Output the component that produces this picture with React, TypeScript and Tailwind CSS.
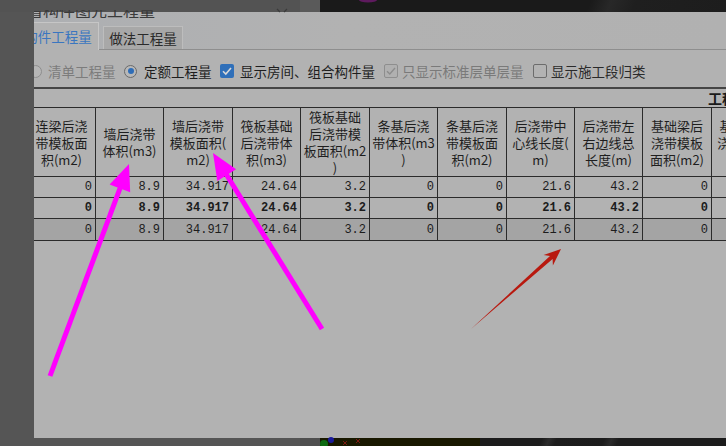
import React from "react";

type Col = { w: number; h: string[]; v: string };

const cols: Col[] = [
  { w: 68, h: ["连梁后浇", "带模板面", "积(m2)"], v: "0" },
  { w: 68, h: ["墙后浇带", "体积(m3)"], v: "8.9" },
  { w: 69, h: ["墙后浇带", "模板面积(", "m2)"], v: "34.917" },
  { w: 68, h: ["筏板基础", "后浇带体", "积(m3)"], v: "24.64" },
  { w: 69, h: ["筏板基础", "后浇带模", "板面积(m2", ")"], v: "3.2" },
  { w: 68, h: ["条基后浇", "带体积(m3", ")"], v: "0" },
  { w: 69, h: ["条基后浇", "带模板面", "积(m2)"], v: "0" },
  { w: 68, h: ["后浇带中", "心线长度(", "m)"], v: "21.6" },
  { w: 68, h: ["后浇带左", "右边线总", "长度(m)"], v: "43.2" },
  { w: 69, h: ["基础梁后", "浇带模板", "面积(m2)"], v: "0" },
  { w: 68, h: ["基础梁后", "浇带体积(", "m3)"], v: "" },
];

function Radio({ checked, dim }: { checked?: boolean; dim?: boolean }) {
  return (
    <span
      className={
        "flex items-center justify-center w-[13px] h-[13px] rounded-full border shrink-0 " +
        (dim ? "border-[#8e8e8e] bg-[#b6b6b6]" : "border-[#6a6a6a] bg-[#b8b8b8]")
      }
    >
      {checked ? <span className="w-[6px] h-[6px] rounded-full bg-[#2f6db7]" /> : null}
    </span>
  );
}

function Check({ kind }: { kind: "on" | "dis" | "off" }) {
  if (kind === "on")
    return (
      <span className="flex items-center justify-center w-[14px] h-[14px] rounded-[2px] bg-[#2f6fb9] shrink-0">
        <svg width="12" height="12" viewBox="0 0 12 12">
          <path d="M2 6.2 L4.8 9 L10 3" fill="none" stroke="#d8d8d8" strokeWidth="1.6" />
        </svg>
      </span>
    );
  if (kind === "dis")
    return (
      <span className="flex items-center justify-center w-[14px] h-[14px] rounded-[2px] border border-[#8e8e8e] bg-[#b0b0b0] shrink-0">
        <svg width="12" height="12" viewBox="0 0 12 12">
          <path d="M2 6.2 L4.8 9 L10 3" fill="none" stroke="#8c8c8c" strokeWidth="1.4" />
        </svg>
      </span>
    );
  return <span className="w-[14px] h-[14px] rounded-[2px] border border-[#6c6c6c] bg-[#b3b3b3] shrink-0" />;
}

export default function App() {
  const rows = [
    { bold: false, bg: "bg-[#b2b2b2]", h: "h-[21px]" },
    { bold: true, bg: "bg-[#b2b2b2]", h: "h-[21px]" },
    { bold: false, bg: "bg-[#a4a4a4]", h: "h-[22px]" },
  ];
  return (
    <div className="relative w-[726px] h-[446px] overflow-hidden bg-[#555555] font-['Noto_Sans_CJK_SC','Noto_Sans',sans-serif]">
      {/* top strip */}
      <div className="flex h-[12px]">
        <div className="w-[300px] bg-[#535353]" />
        <div className="w-[20px] bg-[#5a5a5a]" />
        <div className="flex-1 bg-[linear-gradient(112deg,#1a1a1a_0%,#1a1a1a_66%,#282828_71%,#1f1f1f_77%,#1d1d1d_100%)]" />
      </div>

      {/* middle */}
      <div className="flex h-[426px]">
        <div className="w-[34px] bg-[#555555]" />
        <div className="w-[692px] flex flex-col overflow-hidden bg-[#b2b2b2]">
          {/* tabs */}
          <div className="h-[38px] shrink-0 flex items-end border-b border-[#8e8e8e] bg-[linear-gradient(90deg,#adafb2_0%,#b2b2b2_45%,#b1b1b1_100%)]">
            <div className="-ml-[16px] -mb-px w-[81px] h-[28px] shrink-0 bg-[#b2b2b2] border-t border-r border-[#c6c6c6] flex items-center justify-center text-[13.5px] leading-[16px] text-[#3a76c0] pb-[1px]">
              构件工程量
            </div>
            <div className="ml-[4px] w-[80px] h-[23px] shrink-0 bg-[#a8a8a8] border border-b-0 border-[#bdbdbd] flex items-center justify-center text-[13.5px] leading-[16px] text-[#2a2a2a]">
              做法工程量
            </div>
          </div>

          {/* options */}
          <div className="h-[37px] shrink-0 flex items-center pt-[5px] text-[13.5px] leading-[16px] whitespace-nowrap">
            <div className="-ml-[5px] flex items-center">
              <Radio dim />
              <span className="ml-[6px] text-[#7c7c7c]">清单工程量</span>
            </div>
            <div className="ml-[8.5px] flex items-center">
              <Radio checked />
              <span className="ml-[7px] text-[#1e1e1e]">定额工程量</span>
            </div>
            <div className="ml-[8.5px] flex items-center">
              <Check kind="on" />
              <span className="ml-[6px] text-[#1e1e1e]">显示房间、组合构件量</span>
            </div>
            <div className="ml-[9px] flex items-center">
              <Check kind="dis" />
              <span className="ml-[4px] text-[#7a7a7a]">只显示标准层单层量</span>
            </div>
            <div className="ml-[9.5px] flex items-center">
              <Check kind="off" />
              <span className="ml-[4px] text-[#2a2a2a]">显示施工段归类</span>
            </div>
          </div>

          {/* group header */}
          <div className="h-[21px] shrink-0 border-t-2 border-b border-t-[#454545] border-b-[#2b2b2b] whitespace-nowrap pl-[674px] text-[14px] leading-[18px] font-bold text-[#1a1a1a]">
            工程量
          </div>

          {/* table */}
          <div className="-ml-[6px] flex flex-col shrink-0">
            <div className="flex">
              {cols.map((c, i) => (
                <div
                  key={i}
                  style={{ width: c.w }}
                  className="h-[69px] shrink-0 border-r border-b border-[#2b2b2b] flex flex-col items-center justify-center text-center text-[13px] leading-[17px] text-[#1e1e1e] whitespace-nowrap overflow-hidden"
                >
                  {c.h.map((l, j) => (
                    <div key={j}>{l}</div>
                  ))}
                </div>
              ))}
            </div>
            {rows.map((r, ri) => (
              <div key={ri} className={"flex " + r.bg}>
                {cols.map((c, i) => (
                  <div
                    key={i}
                    style={{ width: c.w }}
                    className={
                      r.h +
                      " shrink-0 border-r border-b border-[#2b2b2b] flex items-center justify-end pr-[3px] font-['Liberation_Mono',monospace] text-[12px] text-[#1c1c1c] " +
                      (r.bold ? "font-bold" : "")
                    }
                  >
                    {c.v}
                  </div>
                ))}
              </div>
            ))}
          </div>
          <div className="flex-1" />
        </div>
      </div>

      {/* bottom strip */}
      <div className="flex h-[8px]">
        <div className="w-[300px] bg-[#555555]" />
        <div className="w-[20px] bg-[#4f4f4f]" />
        <div className="w-[160px] bg-[#191800]" />
        <div className="flex-1 bg-[linear-gradient(115deg,#1c1c1c_0%,#1c1c1c_25%,#2c2c2c_28%,#1d1d1d_31%,#1c1c1c_50%,#2a2a2a_53%,#1c1c1c_56%,#1c1c1c_100%)]" />
      </div>

      {/* window title (clipped) */}
      <div className="absolute left-[34px] top-[10px] h-[8px] w-[140px] overflow-hidden">
        <div className="-mt-[8px] -ml-[23px] text-[16px] leading-[16px] whitespace-nowrap text-[#3a3a3a]">
          查看构件图元工程量
        </div>
      </div>

      {/* annotations */}
      <svg className="absolute inset-0 pointer-events-none" width="726" height="446" viewBox="0 0 726 446">
        <path d="M277 9 L280 12 M287 9 L284 12" stroke="#3a3a3a" strokeWidth="1.2" />
        <ellipse cx="368" cy="0" rx="9" ry="2.5" fill="#5e1a5e" />
        <circle cx="324" cy="444" r="4" fill="#0d6a12" />
        <circle cx="331" cy="440" r="3" fill="#1a1a9a" />
        <path d="M343 441 L347 445 M347 441 L343 445 M356 439 L360 443 M360 439 L356 443" stroke="#7a1a10" strokeWidth="1" />
        {/* magenta arrow 1 */}
        <line x1="50" y1="376" x2="120.5" y2="187" stroke="#ff00ff" strokeWidth="5" />
        <polygon points="129,164 130.2,192.2 109.6,184.6" fill="#ff00ff" />
        {/* magenta arrow 2 */}
        <line x1="322" y1="329" x2="226.2" y2="174.3" stroke="#ff00ff" strokeWidth="5" />
        <polygon points="213,153 236.1,169.3 217.3,180.9" fill="#ff00ff" />
        {/* red arrow */}
        <polygon
          points="471,329 550.0,256.1 543.6,255.1 561,249 552.9,265.5 552.6,259.1"
          fill="#b8190f"
        />
      </svg>
    </div>
  );
}
